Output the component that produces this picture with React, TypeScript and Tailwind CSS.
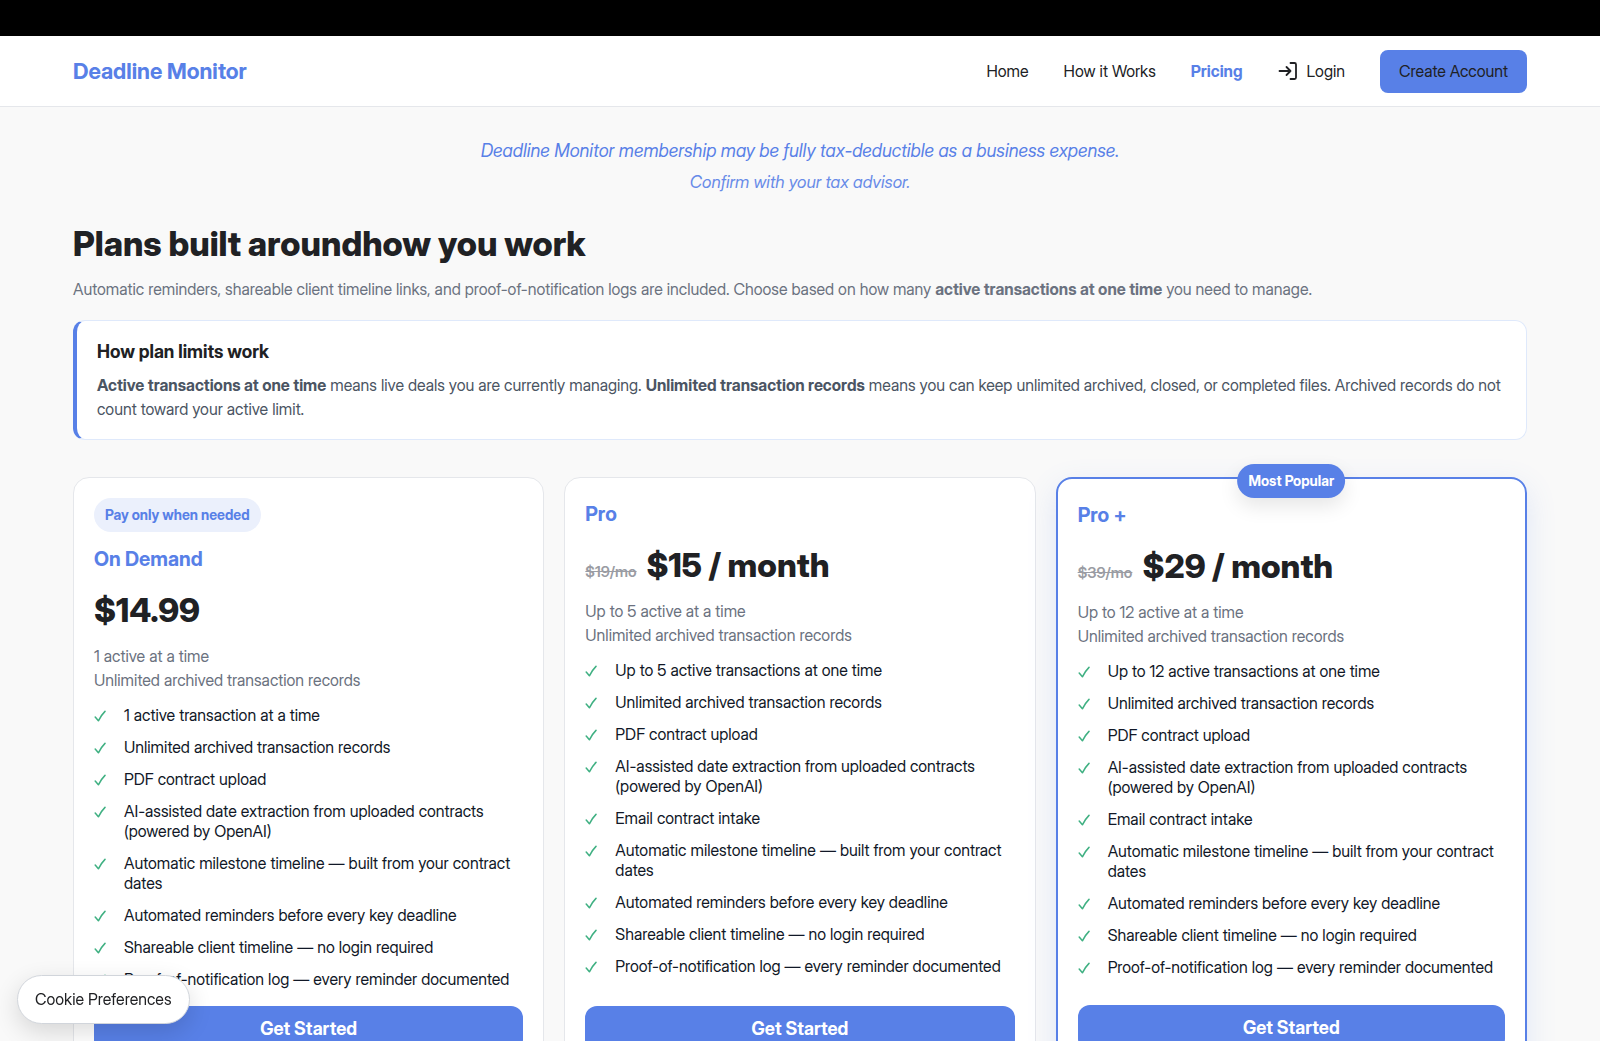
type Plan = {
  name: string;
  tag?: string;
  badge?: string;
  was?: string;
  price: string;
  limit: string;
  features: string[];
};

const shared = [
  "Automatic milestone timeline — built from your contract dates",
  "Automated reminders before every key deadline",
  "Shareable client timeline — no login required",
  "Proof-of-notification log — every reminder documented",
];
const intake = [
  "Unlimited archived transaction records",
  "PDF contract upload",
  "AI-assisted date extraction from uploaded contracts (powered by OpenAI)",
];

const plans: Plan[] = [
  {
    name: "On Demand",
    tag: "Pay only when needed",
    price: "$14.99",
    limit: "1 active at a time",
    features: ["1 active transaction at a time", ...intake, ...shared],
  },
  {
    name: "Pro",
    was: "$19/mo",
    price: "$15 / month",
    limit: "Up to 5 active at a time",
    features: ["Up to 5 active transactions at one time", ...intake, "Email contract intake", ...shared],
  },
  {
    name: "Pro +",
    badge: "Most Popular",
    was: "$39/mo",
    price: "$29 / month",
    limit: "Up to 12 active at a time",
    features: ["Up to 12 active transactions at one time", ...intake, "Email contract intake", ...shared],
  },
];

function Check() {
  return (
    <svg viewBox="0 0 12 12" className="mt-[5px] size-3 shrink-0" fill="none" stroke="#3fb082" strokeWidth="1.5" strokeLinecap="round" strokeLinejoin="round" aria-hidden="true">
      <path d="M1.200 7 4.400 10.800C6 7.600 8.200 4.200 11 1.400" />
    </svg>
  );
}

function LoginIcon() {
  return (
    <svg viewBox="0 0 20 20" className="size-5" fill="none" stroke="currentColor" strokeWidth="1.800" strokeLinecap="round" strokeLinejoin="round" aria-hidden="true">
      <path d="M12.500 2h4a1.500 1.500 0 0 1 1.500 1.500v13a1.500 1.500 0 0 1-1.500 1.500h-4" />
      <path d="M1.500 10h11M8.500 6l4 4-4 4" />
    </svg>
  );
}

function PlanCard({ plan }: { plan: Plan }) {
  return (
    <article
      className={
        plan.badge
          ? "relative flex flex-col rounded-2xl border-2 border-[#5880e7] bg-white p-5 shadow-[0_10px_30px_rgba(88,128,231,0.16)]"
          : "relative flex flex-col rounded-2xl border border-[#e5e7eb] bg-white p-5"
      }
    >
      {plan.badge && (
        <span className="absolute -top-[15px] left-1/2 -translate-x-1/2 rounded-full bg-[#5880e7] px-[11px] text-sm leading-[34px] font-bold whitespace-nowrap text-white shadow-[0_8px_20px_rgba(0,0,0,0.1)]">
          {plan.badge}
        </span>
      )}
      {plan.tag && (
        <span className="mb-[11px] self-start rounded-full bg-[#ebf0fc] px-[11px] text-sm leading-[34px] font-bold text-[#5880e7]">
          {plan.tag}
        </span>
      )}
      <h3 className="text-xl leading-8 font-bold text-[#5880e7]">{plan.name}</h3>
      <p className="mt-3 flex items-baseline gap-2.5">
        {plan.was && <s className="text-[15px] leading-5 font-semibold text-[#9a9ca3]">{plan.was}</s>}
        <strong className="text-[33px] leading-[46px] font-extrabold text-[#202124]">{plan.price}</strong>
      </p>
      <p className="mt-[11px] leading-6 text-[#6b7280]">
        {plan.limit}
        <br />
        Unlimited archived transaction records
      </p>
      <ul className="mt-[13px] mb-[17px] flex flex-col gap-3 leading-5 text-[#111827]">
        {plan.features.map((f) => (
          <li key={f} className="flex gap-[18px]">
            <Check />
            <span>{f}</span>
          </li>
        ))}
      </ul>
      <button type="button" className="mt-auto h-[46px] rounded-xl bg-[#5880e7] text-lg font-bold text-white">
        Get Started
      </button>
    </article>
  );
}

export default function App() {
  return (
    <div className="min-h-screen bg-[#f9f9f9] font-['Inter_Display','Inter',sans-serif] text-base text-[#202124]">
      <div className="h-9 bg-black" />
      <header className="border-b border-[#e5e7eb] bg-white px-6">
        <div className="mx-auto flex h-[70px] max-w-[1454px] items-center justify-between">
          <a href="#" className="text-[22px] font-bold text-[#5880e7]">Deadline Monitor</a>
          <nav className="flex items-center gap-[35px] leading-[43px]">
            <a href="#home">Home</a>
            <a href="#how">How it Works</a>
            <a href="#pricing" className="font-bold text-[#5880e7]">Pricing</a>
            <a href="#login" className="flex items-center gap-[9px]">
              <LoginIcon />
              Login
            </a>
            <a href="#signup" className="rounded-lg bg-[#5880e7] px-[19px]">Create Account</a>
          </nav>
        </div>
      </header>
      <main className="px-6 pb-12">
        <div className="mx-auto max-w-[1454px]">
          <div className="pt-7 text-center text-[#5880e7] italic">
            <p className="text-lg leading-8">Deadline Monitor membership may be fully tax-deductible as a business expense.</p>
            <p className="text-[17px] leading-[30px] opacity-90">Confirm with your tax advisor.</p>
          </div>
          <h1 className="mt-6 text-[34px] leading-[46px] font-extrabold">Plans built aroundhow you work</h1>
          <p className="mt-2.5 leading-6 text-[#6b7280]">
            Automatic reminders, shareable client timeline links, and proof-of-notification logs are included. Choose based on how many{" "}
            <strong>active transactions at one time</strong> you need to manage.
          </p>
          <section className="mt-[19px] rounded-xl border border-l-4 border-[#dfe9fb] border-l-[#5880e7] bg-white px-5 py-[18px]">
            <h2 className="text-lg leading-[26px] font-bold">How plan limits work</h2>
            <p className="mt-2 leading-6 text-[#4b5563]">
              <strong>Active transactions at one time</strong> means live deals you are currently managing.{" "}
              <strong>Unlimited transaction records</strong> means you can keep unlimited archived, closed, or completed files. Archived records do not count toward your active limit.
            </p>
          </section>
          <div className="mt-[37px] grid grid-cols-3 gap-5">
            {plans.map((p) => (
              <PlanCard key={p.name} plan={p} />
            ))}
          </div>
        </div>
      </main>
      <button type="button" className="fixed bottom-[17px] left-[17px] h-[49px] rounded-full border border-[#d1d5db] bg-white px-[17px] pb-0.5 shadow-[0_8px_24px_rgba(0,0,0,0.14)]">
        Cookie Preferences
      </button>
    </div>
  );
}
